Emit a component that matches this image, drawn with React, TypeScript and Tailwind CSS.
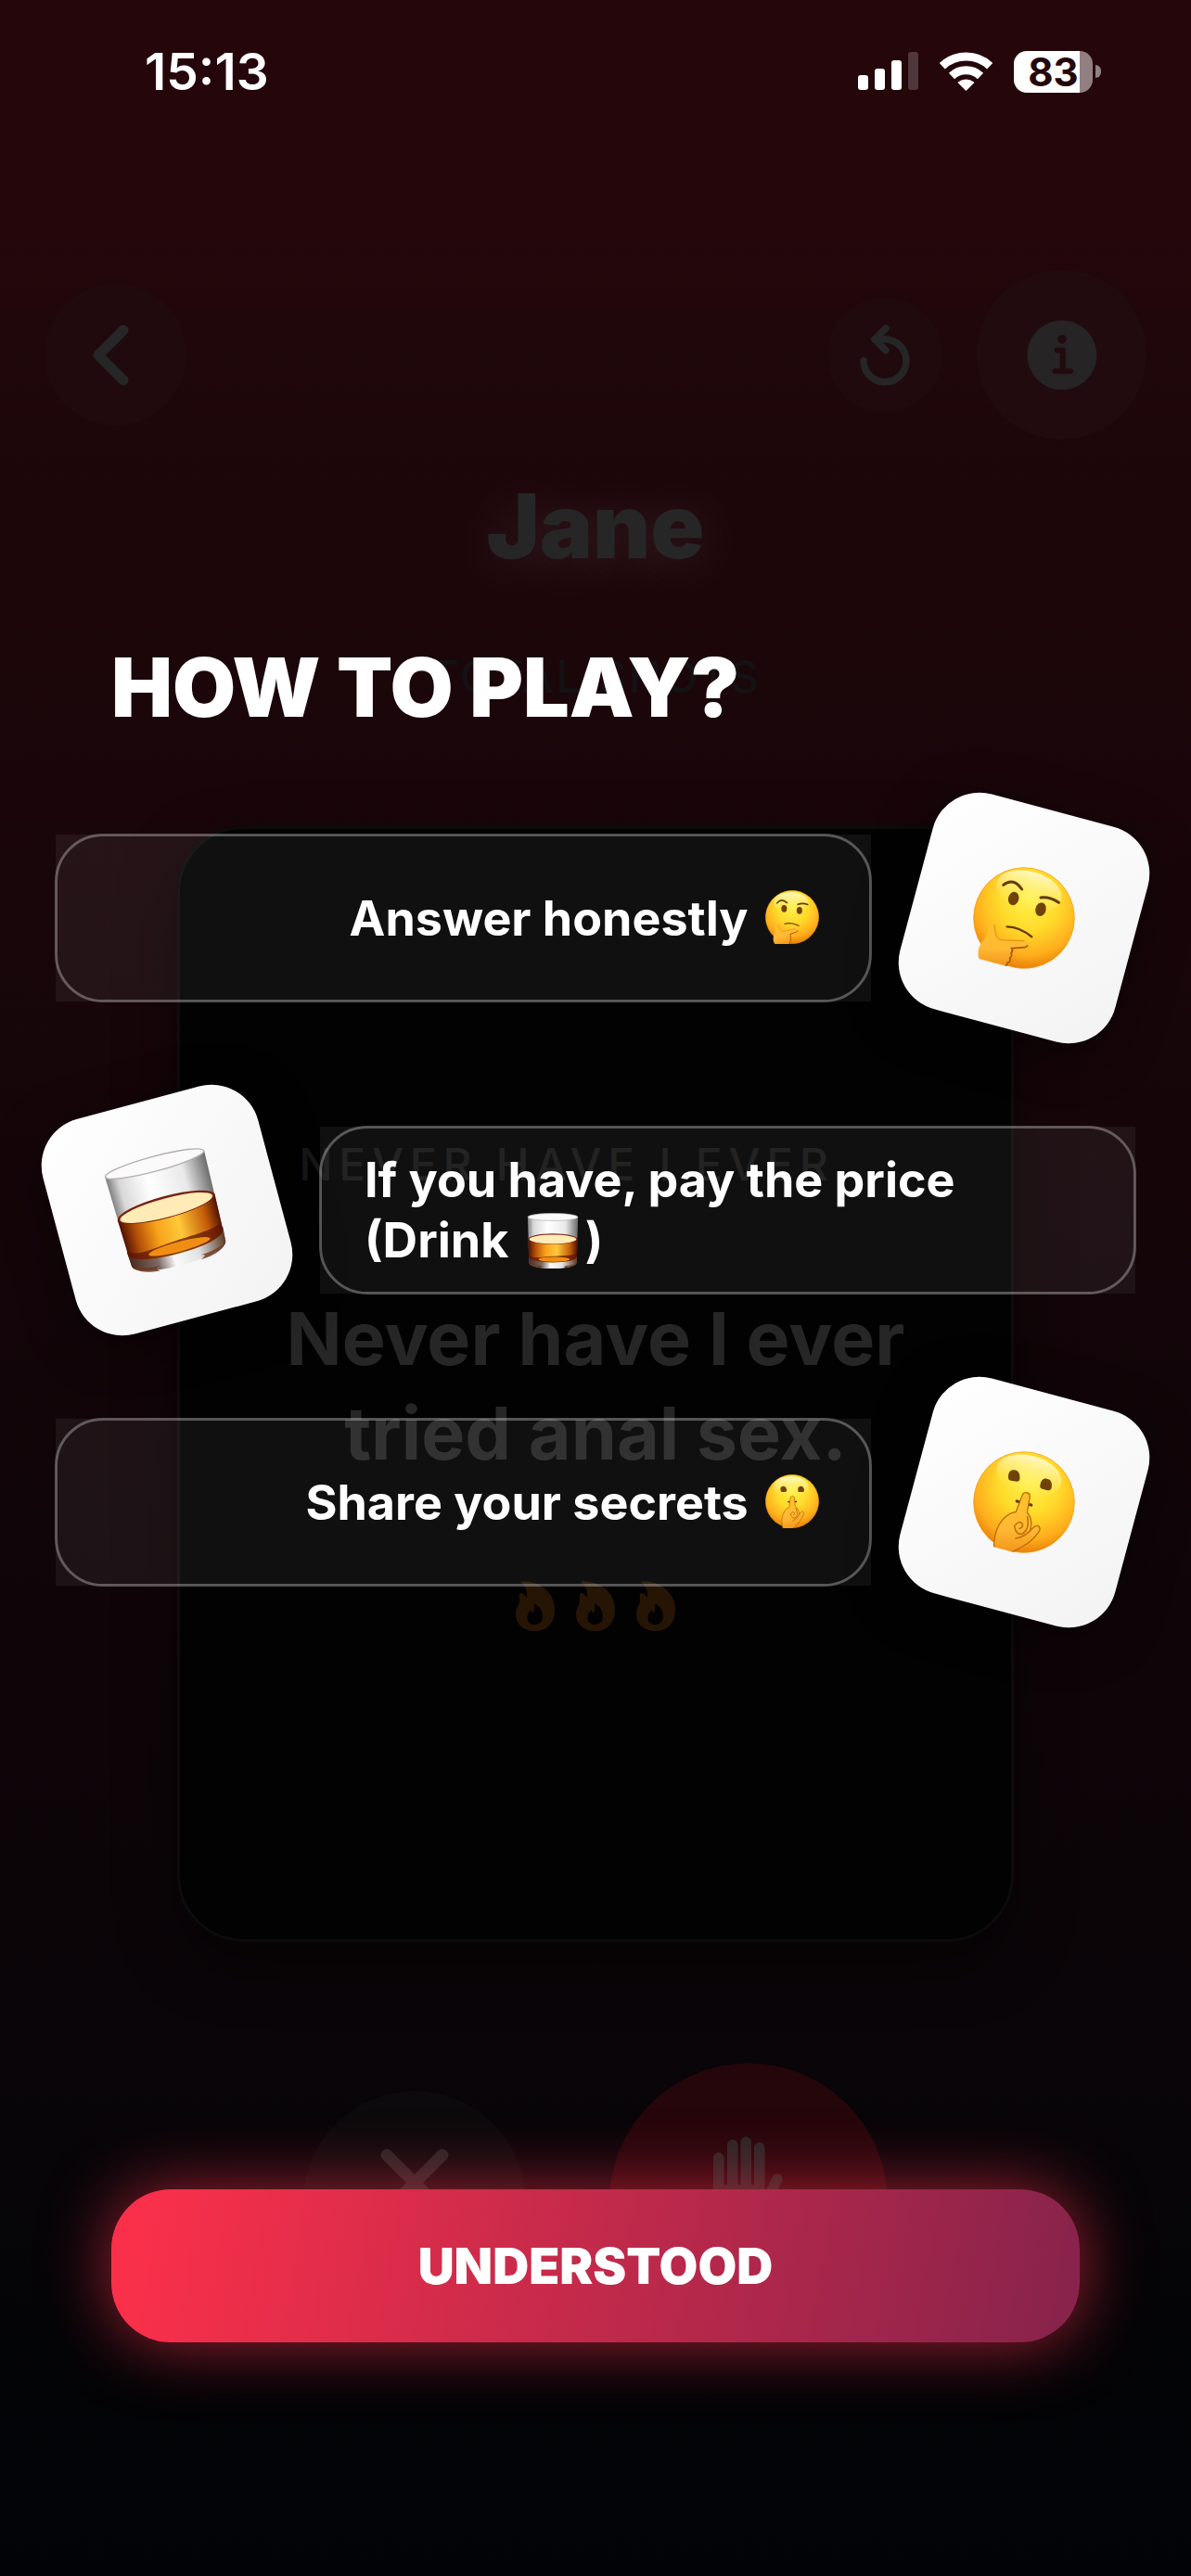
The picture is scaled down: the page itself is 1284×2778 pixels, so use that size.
import React from "react";
import { IoInformationCircle } from "react-icons/io5";

function StatusBar() {
  return (
    <header className="flex h-[154px] items-center justify-between pr-[97px] pl-[156px]">
      <time className="text-[55px] leading-[60px] font-semibold text-white">15:13</time>
      <div className="flex items-center gap-[23px]">
        <svg width="65" height="42" viewBox="0 0 65 42" fill="#fff" aria-label="Signal">
          <rect x="0" y="25" width="11" height="16" rx="3" />
          <rect x="18" y="18" width="11" height="23" rx="3" />
          <rect x="36" y="9" width="11" height="32" rx="3" />
          <rect x="54" y="0" width="11" height="41" rx="3" opacity=".2" />
        </svg>
        <svg width="57" height="42" viewBox="0 0 57 42" fill="none" stroke="#fff" aria-label="Wi-Fi">
          <path d="M2.8 15.2A37.5 37.5 0 0 1 54.2 15.2" strokeWidth="9" />
          <path d="M13 26A22.5 22.5 0 0 1 44 26" strokeWidth="9" />
          <path d="M20.5 33A13 13 0 0 1 36.5 33L28.5 41Z" fill="#fff" strokeWidth="1.5" strokeLinejoin="round" />
        </svg>
        <div className="flex items-center gap-[3px]">
          <div className="flex h-[45px] w-[85px] items-center justify-center rounded-[14px] bg-linear-to-r from-white from-83% to-[#927f82] to-83% text-[42px] leading-[45px] font-bold text-[#25060b]">
            83
          </div>
          <div className="h-[14px] w-[6px] rounded-r-full bg-[#927f82]" />
        </div>
      </div>
    </header>
  );
}

function ThinkingFace({ className }: { className: string }) {
  return (
    <svg className={className} viewBox="55 68 330 330" role="img" aria-label="Thinking face">
      <defs>
        <radialGradient id="think" cx=".55" cy=".32" r=".7">
          <stop offset="0" stopColor="#fff04a" />
          <stop offset=".42" stopColor="#ffdb2b" />
          <stop offset=".78" stopColor="#ffae1c" />
          <stop offset="1" stopColor="#e57c08" />
        </radialGradient>
        <linearGradient id="shine" x1="0" y1="0" x2="0" y2="1">
          <stop offset="0" stopColor="#fffde0" stopOpacity=".85" />
          <stop offset="1" stopColor="#fff36b" stopOpacity="0" />
        </linearGradient>
        <linearGradient id="hand" x1="0" y1="0" x2="0" y2="1">
          <stop offset="0" stopColor="#ffc22a" />
          <stop offset=".6" stopColor="#ffb934" />
          <stop offset="1" stopColor="#f29318" />
        </linearGradient>
      </defs>
      <g transform="rotate(-15 220 233)">
        <circle cx="220" cy="233" r="163" fill="url(#think)" stroke="#f09a10" strokeWidth="2" />
        <ellipse cx="236" cy="146" rx="108" ry="64" transform="rotate(15 236 146)" fill="url(#shine)" />
        <g fill="none" stroke="#643b06" strokeLinecap="round">
          <path d="M153 126Q186 100 213 140" strokeWidth="9" />
          <path d="M274 167Q305 164 332 183" strokeWidth="9" />
          <path d="M165 261Q207 262 245 294" strokeWidth="7" />
        </g>
        <g fill="#6f4206">
          <ellipse cx="186" cy="170" rx="17" ry="22" transform="rotate(15 186 170)" />
          <ellipse cx="274" cy="205" rx="17" ry="22" transform="rotate(15 274 205)" />
        </g>
        <path
          d="M104 255C103 240 120 240 124 254L128 283Q131 300 146 304L221 307C237 309 237 327 222 328L180 331Q186 339 178 347Q183 356 174 362Q178 374 166 378Q166 390 150 390L100 388C74 382 65 350 76 325Q80 312 90 303Q103 290 104 255Z"
          fill="url(#hand)"
        />
        <path d="M124 254L128 283Q131 300 146 304L221 307" fill="none" stroke="#e0890f" strokeWidth="3" />
        <path d="M231 322Q228 328 222 328L180 331Q186 339 178 347Q183 356 174 362Q178 374 166 378Q166 388 158 390" fill="none" stroke="#a9560a" strokeWidth="5" strokeLinecap="round" />
      </g>
    </svg>
  );
}

function ShushingFace({ className }: { className: string }) {
  return (
    <svg className={className} viewBox="56 66 330 330" role="img" aria-label="Shushing face">
      <g transform="rotate(-15 221 231)">
        <circle cx="221" cy="231" r="163" fill="url(#think)" stroke="#f09a10" strokeWidth="2" />
        <ellipse cx="237" cy="144" rx="108" ry="64" transform="rotate(15 237 144)" fill="url(#shine)" />
        <g fill="#6f4206">
          <path d="M170 150C170 132 178 126 190 127C203 128 209 140 207 156C206 165 200 165 188 163C175 161 170 160 170 150Z" />
          <path d="M273 178C275 160 283 153 295 155C308 157 313 169 310 184C308 194 302 194 291 191C278 188 272 187 273 178Z" />
        </g>
        <path d="M198 228L244 240" stroke="#643b06" strokeWidth="10" strokeLinecap="round" />
        <path
          d="M214 212C219 194 241 198 240 214L231 264Q246 280 244 305L241 322L256 309C268 303 276 314 270 325Q247 358 215 375C190 386 185 397 155 397C130 397 121 380 124 360C128 325 140 285 180 266L195 262Z"
          fill="url(#hand)"
          stroke="#bf6c0a"
          strokeWidth="4"
        />
        <path d="M190 308Q196 340 216 333Q240 318 232 278M190 308Q206 286 216 302Q218 314 206 316M194 348Q222 343 242 322" fill="none" stroke="#c47309" strokeWidth="5" strokeLinecap="round" />
      </g>
    </svg>
  );
}

function Tumbler({ className }: { className: string }) {
  return (
    <svg className={className} viewBox="0 0 320 350" role="img" aria-label="Whisky glass">
      <defs>
        <linearGradient id="glass">
          <stop offset="0" stopColor="#7d7d7d" />
          <stop offset=".12" stopColor="#d9d9d9" />
          <stop offset=".4" stopColor="#ffffff" />
          <stop offset=".75" stopColor="#e9e9e9" />
          <stop offset="1" stopColor="#6a6a6a" />
        </linearGradient>
        <linearGradient id="whisky">
          <stop offset="0" stopColor="#4e0f05" />
          <stop offset=".15" stopColor="#b55008" />
          <stop offset=".35" stopColor="#f8a11a" />
          <stop offset=".58" stopColor="#ffc93a" />
          <stop offset=".85" stopColor="#c35c08" />
          <stop offset="1" stopColor="#4e0f05" />
        </linearGradient>
        <linearGradient id="base">
          <stop offset="0" stopColor="#4a2a1c" />
          <stop offset=".28" stopColor="#7c6a64" />
          <stop offset=".45" stopColor="#fafafa" />
          <stop offset=".7" stopColor="#e2e2e2" />
          <stop offset="1" stopColor="#57351f" />
        </linearGradient>
      </defs>
      <path d="M2 26L10 310C10 336 80 349 160 349S310 336 310 310L318 26Z" fill="url(#glass)" />
      <path d="M7 268L10 310C10 336 80 349 160 349S310 336 310 310L313 268Z" fill="url(#base)" />
      <path d="M12 318C30 340 60 346 92 348Q70 336 100 334Q50 332 12 318ZM308 318C290 340 260 346 222 348Q250 336 225 334Q270 332 308 318Z" fill="#6b3a22" opacity=".8" />
      <path d="M5 162L9 276C14 300 80 312 160 312S306 300 311 276L315 162Z" fill="url(#whisky)" />
      <path d="M8 262C30 292 90 276 160 272S290 270 311 252L310 276C304 300 240 312 160 312S14 300 9 276Z" fill="#5d1405" opacity=".75" />
      <ellipse cx="168" cy="292" rx="98" ry="15" fill="#f08e14" />
      <ellipse cx="160" cy="164" rx="154" ry="34" fill="#7a2113" />
      <ellipse cx="160" cy="166" rx="147" ry="29" fill="#ffebb6" />
      <ellipse cx="160" cy="26" rx="157" ry="23" fill="#fafafa" stroke="#b5afac" strokeWidth="4" />
    </svg>
  );
}

function Flame() {
  return (
    <svg width="42" height="54" viewBox="0 0 42 54" fill="#261505">
      <path
        fillRule="evenodd"
        d="M6 .5C22-1 42 10 42 31C42 46 33 54 20 54C8 54 0 46 0 36C0 28 4 26 4 21C4 17 3 14 5 13C8 13 10 15 12 18C13 11 10 5 6 2ZM20 24.500C26 27 29 33 29 38C29 44 25 47 20.500 47C15 47 12.500 44 12.500 40C12.500 35 15 33 16.500 31C17 33 18 34 18.500 35C20 32 20.500 28 20 24.500Z"
      />
    </svg>
  );
}

function GameScreen() {
  return (
    <div className="flex min-h-screen flex-col pt-[291px] pb-[252px]">
      <nav className="flex items-center justify-between px-12">
        <button aria-label="Back" className="flex size-[153px] items-center justify-center rounded-full bg-[#200a0d]">
          <svg width="40" height="66" viewBox="0 0 40 66" fill="none" stroke="#262626" strokeWidth="11" strokeLinecap="round" strokeLinejoin="round" className="mr-3">
            <path d="M34 6L7 33L34 60" />
          </svg>
        </button>
        <div className="flex items-center gap-[37px]">
          <button aria-label="Undo" className="flex size-[124px] items-center justify-center rounded-full bg-[#200a0d]">
            <svg width="54" height="66" viewBox="0 0 54 66" fill="none" stroke="#262626" strokeWidth="7.500" strokeLinecap="round" strokeLinejoin="round">
              <path d="M4 39A23 23 0 1 0 27 16H16" />
              <path d="M28 4L16 16L28 28" />
            </svg>
          </button>
          <button aria-label="Information" className="flex size-[183px] items-center justify-center rounded-full bg-[#210b0e]">
            <IoInformationCircle size={96} color="#262424" />
          </button>
        </div>
      </nav>

      <h2 className="mt-[35px] text-center text-[96px] leading-[116px] font-black text-[#262626] [text-shadow:0_6px_60px_rgba(255,255,255,0.12)]">Jane</h2>
      <p className="mt-[75px] text-center text-[48px] leading-[60px] font-medium tracking-wider text-[#141214]">TOTAL SHOTS</p>

      <section className="mx-[191px] mt-[131px] flex min-h-[1203px] flex-col items-center justify-center rounded-[72px] border-[3px] border-[#0c0c0c] bg-[#020202] text-center shadow-[0_24px_60px_rgba(0,0,0,0.5)]">
        <p className="pr-[62px] text-[48px] leading-[60px] font-medium tracking-[0.14em] whitespace-nowrap text-[#161616]">NEVER HAVE I EVER</p>
        <p className="mt-[106px] text-[79px] leading-[102px] font-bold text-[#262626]">
          Never have I ever
          <br />
          tried anal sex.
        </p>
        <div className="mt-[109px] flex gap-[23px]">
          <Flame />
          <Flame />
          <Flame />
        </div>
      </section>

      <div className="mt-[131px] flex items-center justify-center gap-[90px]">
        <button aria-label="I have not" className="flex size-60 justify-center rounded-full bg-[#0c0a0c] pt-[62px]">
          <svg width="74" height="74" viewBox="0 0 74 74" stroke="#262626" strokeWidth="13" strokeLinecap="round">
            <path d="M7 7L67 67M67 7L7 67" />
          </svg>
        </button>
        <button aria-label="I have" className="flex size-[300px] justify-center rounded-full bg-[#25060b] pt-[79px]">
          <svg width="76" height="96" viewBox="0 0 76 96" stroke="#2a2626" strokeWidth="11.500" strokeLinecap="round" fill="none">
            <path d="M5.750 23V62M20.750 9V60M35.250 6V60M49.750 12V60M69 46L55 74" />
            <path d="M6 58H50V80Q28 94 6 80Z" fill="#2a2626" strokeLinejoin="round" />
          </svg>
        </button>
      </div>
    </div>
  );
}

type Rule = { text: React.ReactNode; icon: React.ReactNode; flip?: boolean };

const inlineFace = "mx-1.5 inline-block size-[58px] align-[-9px]";

const rules: Rule[] = [
  {
    text: (
      <>
        Answer honestly <ThinkingFace className={inlineFace} />
      </>
    ),
    icon: <ThinkingFace className="size-[110px]" />,
  },
  {
    text: (
      <>
        If you have, pay the price (Drink <Tumbler className="mx-1.5 inline-block h-[60px] w-[58px] align-[-12px]" />)
      </>
    ),
    icon: <Tumbler className="h-[123px] w-[112px]" />,
    flip: true,
  },
  {
    text: (
      <>
        Share your secrets <ShushingFace className={inlineFace} />
      </>
    ),
    icon: <ShushingFace className="size-[110px]" />,
  },
];

function RuleRow({ text, icon, flip }: Rule) {
  return (
    <li className={flip ? "flex flex-row-reverse items-center gap-[45px]" : "flex items-center gap-[45px]"}>
      <div className={flip ? "relative flex min-h-[180px] flex-1 items-center bg-white/6 px-12 text-left" : "relative flex min-h-[180px] flex-1 items-center justify-end bg-white/6 px-[50px] text-right"}>
        <span className="absolute -inset-px rounded-[52px] border-[3px] border-white/30" />
        <p className={flip ? "max-w-[700px] text-[52px] leading-[65px] font-bold text-white" : "text-[52px] leading-[65px] font-bold text-white"}>{text}</p>
      </div>
      <div
        className={
          flip
            ? "flex size-60 shrink-0 -rotate-15 items-center justify-center rounded-[52px] bg-linear-to-br from-white to-[#f3f3f3] shadow-[0_12px_50px_rgba(0,0,0,0.5)]"
            : "flex size-60 shrink-0 rotate-15 items-center justify-center rounded-[52px] bg-linear-to-br from-white to-[#f3f3f3] shadow-[0_12px_50px_rgba(0,0,0,0.5)]"
        }
      >
        {icon}
      </div>
    </li>
  );
}

export default function App() {
  return (
    <div className="relative overflow-hidden bg-[linear-gradient(to_bottom,#25060b_0%,#24060b_9%,#1f070b_13%,#1b060a_27%,#140509_47%,#0b0508_75%,#070508_84%,#030406_93%,#020306_100%)] font-['Inter',sans-serif]">
      <GameScreen />
      <div role="dialog" aria-modal="true" aria-labelledby="rules-title" className="absolute inset-0 flex flex-col pb-[252px]">
        <StatusBar />
        <h1 id="rules-title" className="mt-[532px] px-[120px] text-[88px] leading-[110px] font-black text-white">
          HOW TO PLAY?
        </h1>
        <ul className="mt-[74px] flex flex-col gap-[75px] px-[60px]">
          {rules.map((rule, i) => (
            <RuleRow key={i} {...rule} />
          ))}
        </ul>
        <button className="mx-[120px] mt-auto h-[165px] rounded-[64px] bg-[linear-gradient(100deg,#fa304a_3%,#8a234b_97%)] text-[54px] leading-[60px] font-black text-white shadow-[0_0_72px_rgba(250,48,74,0.65)]">
          UNDERSTOOD
        </button>
      </div>
    </div>
  );
}
